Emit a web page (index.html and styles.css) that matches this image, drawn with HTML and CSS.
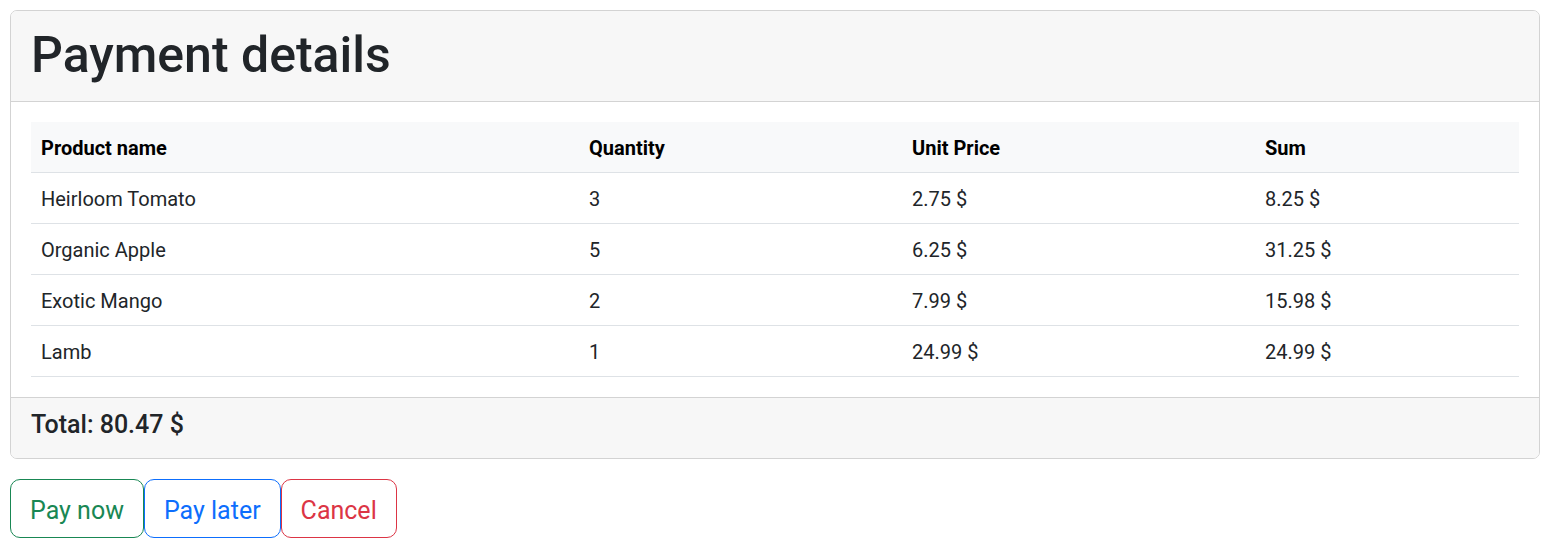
FILE: index.html
```html
<!DOCTYPE html>
<html lang="en">
<head>
<meta charset="utf-8">
<title>Payment details</title>
<link rel="stylesheet" href="styles.css">
</head>
<body>
<div class="card">
  <div class="card-header">
    <h1 class="title">Payment details</h1>
  </div>
  <div class="card-body">
    <table class="table">
      <colgroup>
        <col class="c1"><col class="c2"><col class="c3"><col class="c4">
      </colgroup>
      <thead>
        <tr><th>Product name</th><th>Quantity</th><th>Unit Price</th><th>Sum</th></tr>
      </thead>
      <tbody>
        <tr><td>Heirloom Tomato</td><td>3</td><td>2.75 $</td><td>8.25 $</td></tr>
        <tr><td>Organic Apple</td><td>5</td><td>6.25 $</td><td>31.25 $</td></tr>
        <tr><td>Exotic Mango</td><td>2</td><td>7.99 $</td><td>15.98 $</td></tr>
        <tr><td>Lamb</td><td>1</td><td>24.99 $</td><td>24.99 $</td></tr>
      </tbody>
    </table>
  </div>
  <div class="card-footer">
    <h5 class="total">Total: 80.47 $</h5>
  </div>
</div>
<div class="actions">
  <button class="btn btn-success">Pay now</button><button class="btn btn-primary">Pay later</button><button class="btn btn-danger">Cancel</button>
</div>
</body>
</html>
```
FILE: styles.css
```css
* { box-sizing: border-box; }
html, body { margin: 0; padding: 0; }
body {
  padding: 10px;
  font-family: Roboto, "Liberation Sans", sans-serif;
  font-size: 20px;
  line-height: 1.5;
  color: #212529;
  background: #fff;
}
.card {
  border: 1px solid #d3d3d3;
  border-radius: 7px;
  overflow: hidden;
}
.card-header {
  background: #f7f7f7;
  border-bottom: 1px solid #d3d3d3;
  padding: 14px 20px 6px;
}
.title {
  margin: 0 0 10px;
  font-size: 50px;
  line-height: 60px;
  font-weight: 500;
  color: #212529;
}
.card-body {
  padding: 20px;
}
.table {
  width: 100%;
  border-collapse: collapse;
  table-layout: fixed;
}
.c1 { width: 548px; }
.c2 { width: 323px; }
.c3 { width: 353px; }
.c4 { width: 264px; }
.table th, .table td {
  text-align: left;
  padding: 11px 10px 9px;
  line-height: 30px;
  border-bottom: 1px solid #dee2e6;
  vertical-align: top;
}
.table thead th {
  background: #f8f9fa;
  color: #000;
  font-weight: 700;
}
.table td { color: #212529; }
.card-footer {
  background: #f7f7f7;
  border-top: 1px solid #d3d3d3;
  padding: 12px 20px 8px;
}
.total {
  margin: 0 0 10px;
  font-size: 25px;
  line-height: 30px;
  font-weight: 500;
  color: #212529;
}
.actions {
  display: flex;
  margin-top: 20px;
}
.btn {
  font-family: inherit;
  font-size: 25px;
  line-height: 37px;
  padding: 12px 19px 8px;
  background: #fff;
  border: 1px solid;
  border-radius: 10px;
  cursor: pointer;
}
.btn-success { color: #198754; border-color: #198754; }
.btn-primary { color: #0d6efd; border-color: #0d6efd; }
.btn-danger { color: #dc3545; border-color: #dc3545; }
```
